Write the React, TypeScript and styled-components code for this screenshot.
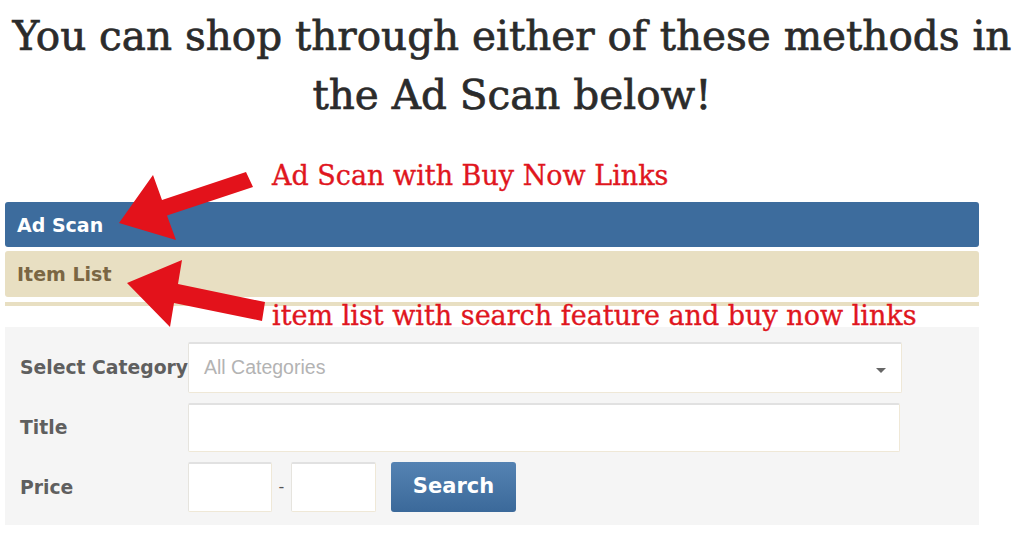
import React from "react";
import styled, { createGlobalStyle } from "styled-components";

const GlobalStyle = createGlobalStyle`
  html, body { margin: 0; padding: 0; background: #ffffff; }
  * { box-sizing: border-box; }
`;

const Page = styled.div`
  position: relative;
  width: 1024px;
  height: 548px;
  overflow: hidden;
  background: #ffffff;
`;

const Heading = styled.h1`
  margin: 0;
  padding-top: 7px;
  text-align: center;
  font-family: "DejaVu Serif", "Liberation Serif", serif;
  font-weight: 400;
  font-size: 40.5px;
  line-height: 59px;
  color: #2b2b2b;
  -webkit-text-stroke: 0.7px #2b2b2b;
`;

const Line = styled.span`
  display: block;
  white-space: nowrap;
`;

const Tabs = styled.div`
  margin: 77px 45px 0 5px;
  display: flex;
  flex-direction: column;
`;

const TabBar = styled.div<{ $active?: boolean }>`
  display: flex;
  align-items: center;
  height: ${(p) => (p.$active ? 45 : 46)}px;
  margin-top: ${(p) => (p.$active ? 0 : 4)}px;
  padding-left: 12px;
  border-radius: 3px;
  background: ${(p) => (p.$active ? "#3d6c9d" : "#e8dfc2")};
  color: ${(p) => (p.$active ? "#ffffff" : "#7a6643")};
  font-family: "DejaVu Sans", "Liberation Sans", sans-serif;
  font-weight: 700;
  font-size: 19px;
`;

const Strip = styled.div`
  margin-top: 5px;
  height: 4px;
  background: #e8dfc2;
`;

const Panel = styled.div`
  margin-top: 21px;
  height: 198px;
  padding: 15px 0 0 15px;
  background: #f5f5f5;
  display: grid;
  grid-template-columns: 168px 1fr;
  grid-auto-rows: auto;
  row-gap: 10px;
  align-items: center;
  align-content: start;
`;

const Label = styled.label`
  font-family: "DejaVu Sans", "Liberation Sans", sans-serif;
  font-weight: 700;
  font-size: 18.8px;
  color: #5f5f5f;
  white-space: nowrap;
`;

const Field = styled.div<{ $w: number; $h: number }>`
  width: ${(p) => p.$w}px;
  height: ${(p) => p.$h}px;
  background: #ffffff;
  border: 1px solid #efe8d7;
  border-top: 2px solid #e1e1e1;
  border-left-color: #e6e4de;
  border-radius: 2px;
`;

const SelectBox = styled(Field)`
  display: flex;
  align-items: center;
  justify-content: space-between;
  padding: 0 15px 0 15px;
`;

const Placeholder = styled.span`
  font-family: "Liberation Sans", Arial, sans-serif;
  font-size: 19.5px;
  color: #b3b3b3;
  padding-bottom: 1px;
`;

const Caret = styled.span`
  width: 0;
  height: 0;
  border-left: 5px solid transparent;
  border-right: 5px solid transparent;
  border-top: 5px solid #666666;
  margin-top: 4px;
`;

const PriceRow = styled.div`
  display: flex;
  align-items: center;
`;

const Dash = styled.span`
  width: 19px;
  text-align: center;
  font-family: "DejaVu Sans", sans-serif;
  font-size: 16px;
  color: #555555;
  padding-bottom: 2px;
`;

const SearchButton = styled.button`
  margin-left: 15px;
  width: 125px;
  height: 50px;
  border: none;
  border-radius: 3px;
  background: linear-gradient(#5583b3, #3b699a);
  color: #ffffff;
  font-family: "DejaVu Sans", "Liberation Sans", sans-serif;
  font-weight: 700;
  font-size: 21px;
  padding: 0;
  padding-bottom: 2px;
`;

const Overlay = styled.div`
  position: absolute;
  inset: 0;
  pointer-events: none;
`;

const Arrows = styled.svg`
  position: absolute;
  left: 0;
  top: 0;
`;

const Note = styled.div<{ $top: number }>`
  position: absolute;
  left: 272px;
  top: ${(p) => p.$top}px;
  font-family: "DejaVu Serif", "Liberation Serif", serif;
  font-size: 27px;
  line-height: 27px;
  color: #e0161e;
  -webkit-text-stroke: 0.35px #e0161e;
  white-space: nowrap;
`;

export default function App() {
  return (
    <Page>
      <GlobalStyle />
      <Heading>
        <Line>You can shop through either of these methods in</Line>
        <Line>the Ad Scan below!</Line>
      </Heading>
      <Tabs>
        <TabBar $active>Ad Scan</TabBar>
        <TabBar>Item List</TabBar>
        <Strip />
        <Panel>
          <Label>Select Category</Label>
          <SelectBox $w={714} $h={51}>
            <Placeholder>All Categories</Placeholder>
            <Caret />
          </SelectBox>
          <Label>Title</Label>
          <Field $w={712} $h={49} />
          <Label>Price</Label>
          <PriceRow>
            <Field $w={84} $h={50} />
            <Dash>-</Dash>
            <Field $w={85} $h={50} />
            <SearchButton>Search</SearchButton>
          </PriceRow>
        </Panel>
      </Tabs>
      <Overlay>
        <Arrows width="1024" height="548" viewBox="0 0 1024 548">
          <polygon
            points="246,172 253,187 167,215.5 176,240 119,223 153,175 162,200"
            fill="#e3121b"
          />
          <polygon
            points="265,302 262,321 174,303 170,327 127,283 182,260 178,284"
            fill="#e3121b"
          />
        </Arrows>
        <Note $top={162}>Ad Scan with Buy Now Links</Note>
        <Note $top={302}>item list with search feature and buy now links</Note>
      </Overlay>
    </Page>
  );
}
